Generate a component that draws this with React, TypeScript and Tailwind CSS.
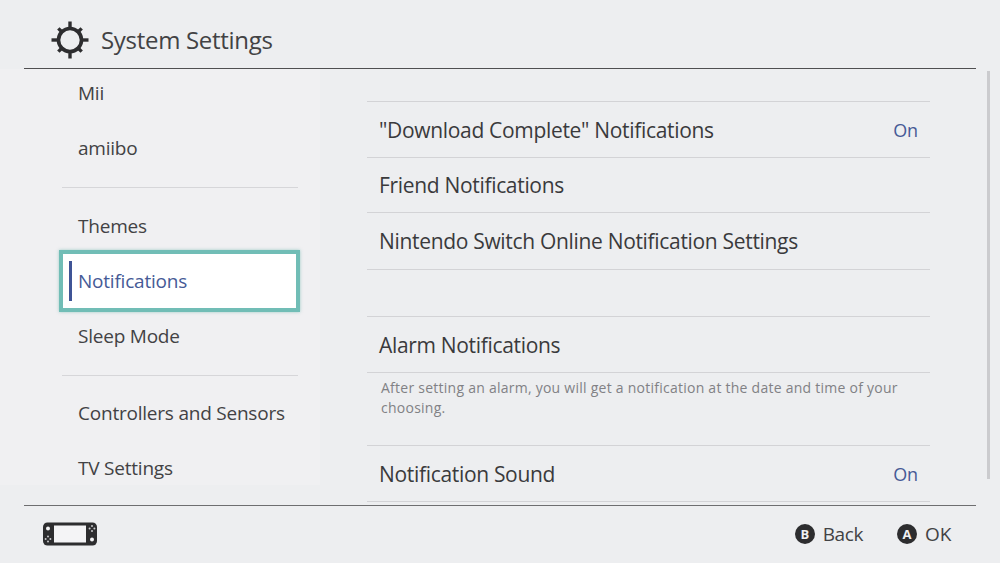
const font = { fontFamily: '"Open Sans", "Noto Sans", sans-serif' };

function Gear() {
  const teeth = [0, 45, 90, 135, 180, 225, 270, 315];
  return (
    <svg width="38" height="38" viewBox="0 0 38 38" className="shrink-0">
      <circle cx="19" cy="19" r="11.5" fill="none" stroke="#2d2d2f" strokeWidth="3.6" />
      {teeth.map((a) => (
        <line key={a} x1="19" y1="7" x2="19" y2={a % 90 === 0 ? 0.5 : 2.5} stroke="#2d2d2f" strokeWidth="3.4" strokeLinecap="butt" transform={`rotate(${a} 19 19)`} />
      ))}
    </svg>
  );
}

function Console() {
  return (
    <svg width="54" height="24" viewBox="0 0 54 24">
      <rect x="0" y="0.5" width="54" height="23" rx="4.5" fill="#2d2d2f" />
      <rect x="11" y="3.5" width="32" height="17" fill="#f4f4f6" />
      <circle cx="5" cy="6.5" r="2" fill="#f4f4f6" />
      <circle cx="49" cy="17.5" r="2" fill="#f4f4f6" />
      {[[5, 14.5], [2.6, 17], [7.4, 17], [5, 19.4], [49, 4], [46.6, 6.5], [51.4, 6.5], [49, 9]].map(([x, y], i) => (
        <circle key={i} cx={x} cy={y} r="1" fill="#c9c9cc" />
      ))}
    </svg>
  );
}

function Btn({ l }: { l: string }) {
  return (
    <span className="w-5 h-5 rounded-full bg-[#2d2d2f] text-[#f0f0f2] flex items-center justify-center text-[13px] font-bold leading-none">{l}</span>
  );
}

function SideItem({ label }: { label: string }) {
  return <div className="h-[55px] flex items-center pl-[16px] text-[19px] text-[#424244] tracking-[-0.22px]">{label}</div>;
}

function Row({ label, on, h }: { label: string; on?: boolean; h: string }) {
  return (
    <div className={`${h} flex items-center justify-between pl-3 pr-3 pt-[2px] text-[21px] text-[#3a3a3c] tracking-[-0.32px] border-b border-[#d3d3d6]`}>
      <span>{label}</span>
      {on && <span className="text-[#465a96] text-[18px] tracking-[-0.1px]">On</span>}
    </div>
  );
}

export default function App() {
  return (
    <div className="w-[1000px] h-[563px] bg-[#edeef0] flex flex-col overflow-hidden" style={font}>
      <header className="h-[69px] shrink-0 mx-6 border-b border-[#4f4f51] flex items-center gap-[12px] pl-[27px] pt-[11px]">
        <Gear />
        <h1 className="text-[24px] text-[#424244] tracking-[-0.3px]">System Settings</h1>
      </header>
      <div className="flex-1 min-h-0 flex overflow-hidden">
        <nav className="w-[320px] h-[416px] shrink-0 bg-[#f0f0f2] pl-[62px] pr-[22px]">
          <div className="-mt-[3.5px]">
            <SideItem label="Mii" />
            <SideItem label="amiibo" />
            <div className="h-[23px] flex items-center">
              <div className="w-full h-px bg-[#d6d6d9]" />
            </div>
            <SideItem label="Themes" />
            <div className="relative h-[55px]">
              <div className="absolute -left-[3px] -right-[2px] -top-[3.5px] h-[62px] bg-white border-[4px] border-[#71bdb6] shadow-[0_0_3px_rgba(80,170,160,0.5)] flex items-center pl-[15px] text-[19px] text-[#465a96] tracking-[-0.22px]">
                <span className="absolute left-[6px] top-[7px] w-[3px] h-[40px] bg-[#3f5496]" />
                Notifications
              </div>
            </div>
            <SideItem label="Sleep Mode" />
            <div className="h-[22px] pt-[2px] flex items-center">
              <div className="w-full h-px bg-[#d6d6d9]" />
            </div>
            <SideItem label="Controllers and Sensors" />
            <SideItem label="TV Settings" />
          </div>
        </nav>
        <main className="flex-1 min-w-0 relative pl-[47px] pr-[70px] pt-[32px]">
          <div className="border-t border-[#d3d3d6]">
            <Row label={'"Download Complete" Notifications'} on h="h-[56px]" />
            <Row label="Friend Notifications" h="h-[55px]" />
            <Row label="Nintendo Switch Online Notification Settings" h="h-[57px]" />
            <div className="h-[47px] border-b border-[#d3d3d6]" />
            <Row label="Alarm Notifications" h="h-[56px]" />
            <div className="h-[73px] border-b border-[#d3d3d6] pl-[14px] pr-[24px] pt-[5px] text-[14px] leading-[20px] tracking-[0.25px] text-[#818185]">
              After setting an alarm, you will get a notification at the date and time of your choosing.
            </div>
            <Row label="Notification Sound" on h="h-[56px]" />
          </div>
          <div className="absolute right-[10px] top-[2px] w-[3px] h-[408px] bg-[#cbcbce]" />
        </main>
      </div>
      <footer className="h-[58px] shrink-0 mx-6 border-t border-[#6e6e70] flex items-center justify-between pl-[19px] pr-[24.5px] pb-[1px]">
        <Console />
        <div className="flex items-center text-[19px] text-[#424244]">
          <Btn l="B" />
          <span className="ml-[8px] tracking-[-0.4px]">Back</span>
          <span className="ml-[34px]"><Btn l="A" /></span>
          <span className="ml-[8px]">OK</span>
        </div>
      </footer>
    </div>
  );
}
